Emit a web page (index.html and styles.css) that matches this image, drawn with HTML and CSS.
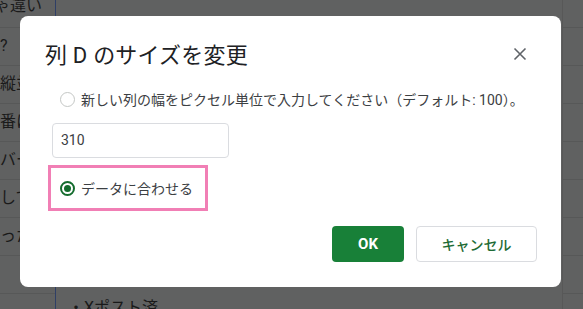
FILE: index.html
```html
<!DOCTYPE html>
<html lang="ja">
<head>
<meta charset="utf-8">
<link rel="stylesheet" href="styles.css">
</head>
<body>
<div class="sheet">
  <div class="col-left">
    <div class="cell c0">ゃ違い</div>
    <div class="cell">?</div>
    <div class="cell">縦並</div>
    <div class="cell">番に</div>
    <div class="cell">バー</div>
    <div class="cell">して</div>
    <div class="cell">った</div>
    <div class="cell"></div>
  </div>
  <div class="col-mid">
    <div class="mid-bottom">・Xポスト済</div>
  </div>
  <div class="col-right">
    <div class="rcell r0"></div>
    <div class="rcell"></div>
    <div class="rcell"></div>
    <div class="rcell"></div>
    <div class="rcell"></div>
    <div class="rcell"></div>
    <div class="rcell"></div>
    <div class="rcell"></div>
  </div>
</div>

<div class="dialog">
  <div class="head">
    <h1 class="title">列 D のサイズを変更</h1>
    <span class="close">
      <svg width="14" height="14" viewBox="0 0 14 14"><path d="M1.5 1.5 L12.5 12.5 M12.5 1.5 L1.5 12.5" stroke="#5f6368" stroke-width="1.6" fill="none"/></svg>
    </span>
  </div>
  <label class="opt opt1">
    <span class="radio"></span>
    <span class="opt-text">新しい列の幅をピクセル単位で入力してください（デフォルト: 100）。</span>
  </label>
  <div class="input">310</div>
  <div class="highlight">
    <label class="opt">
      <span class="radio on"><span class="dot"></span></span>
      <span class="opt-text">データに合わせる</span>
    </label>
  </div>
  <div class="actions">
    <button class="btn ok">OK</button>
    <button class="btn cancel">キャンセル</button>
  </div>
</div>
</body>
</html>
```

FILE: styles.css
```css
html, body {
  margin: 0;
  padding: 0;
}
body {
  width: 583px;
  height: 309px;
  overflow: hidden;
  background: #606161;
  font-family: Roboto, "Noto Sans CJK JP", sans-serif;
  position: relative;
}
.sheet {
  display: flex;
  height: 309px;
}
.col-left {
  width: 55px;
  border-right: 1px solid #2f3f66;
  display: flex;
  flex-direction: column;
}
.cell {
  height: 38px;
  box-sizing: border-box;
  border-bottom: 1px solid #575858;
  font-size: 16px;
  color: #1a1a1a;
  line-height: 36px;
  white-space: nowrap;
  overflow: hidden;
  flex: none;
}
.c0 {
  height: 28px;
  line-height: 12px;
  text-indent: -6px;
}
.col-mid {
  width: 506px;
  position: relative;
  border-right: 1px solid #585858;
}
.mid-bottom {
  position: absolute;
  left: 12px;
  top: 294px;
  font-size: 16px;
  color: #1a1a1a;
}
.col-right {
  flex: 1;
  display: flex;
  flex-direction: column;
}
.rcell {
  height: 38px;
  box-sizing: border-box;
  border-bottom: 1px solid #575858;
  flex: none;
}
.r0 {
  height: 28px;
}

.dialog {
  position: absolute;
  left: 20px;
  top: 16px;
  width: 541px;
  height: 271px;
  box-sizing: border-box;
  background: #fff;
  border-radius: 8px;
  padding: 22px 24px 25px 25px;
  display: flex;
  flex-direction: column;
}
.head {
  display: flex;
  justify-content: space-between;
  align-items: center;
  height: 30px;
}
.title {
  margin: 0;
  font-size: 22px;
  font-weight: 400;
  color: #202124;
  letter-spacing: 0.2px;
}
.close {
  display: flex;
  margin-right: 10px;
  margin-top: 2px;
}
.opt {
  display: flex;
  align-items: center;
  gap: 6px;
  font-size: 14px;
  color: #3c4043;
}
.opt1 {
  margin-top: 21px;
  margin-left: 15px;
  height: 20px;
}
.radio {
  width: 15px;
  height: 15px;
  border: 1.5px solid #c4c7c5;
  border-radius: 50%;
  box-sizing: border-box;
  display: flex;
  align-items: center;
  justify-content: center;
  flex: none;
}
.radio.on {
  border: 2px solid #146c2e;
}
.dot {
  width: 7px;
  height: 7px;
  border-radius: 50%;
  background: #146c2e;
}
.input {
  margin-top: 14px;
  margin-left: 7px;
  width: 177px;
  height: 35px;
  box-sizing: border-box;
  border: 1px solid #dadce0;
  border-radius: 4px;
  padding-left: 8px;
  font-size: 14px;
  line-height: 33px;
  color: #3c4043;
}
.highlight {
  margin-top: 7px;
  margin-left: 3px;
  width: 160px;
  height: 46px;
  box-sizing: border-box;
  border: 3px solid #f17fb5;
  display: flex;
  align-items: center;
  padding-left: 9px;
}
.actions {
  margin-top: auto;
  display: flex;
  justify-content: flex-end;
  gap: 12px;
}
.btn {
  height: 36px;
  border-radius: 4px;
  font-family: Roboto, "Noto Sans CJK JP", sans-serif;
  font-size: 14px;
  font-weight: 700;
  cursor: pointer;
}
.ok {
  width: 72px;
  background: #188038;
  color: #fff;
  border: none;
  font-size: 15px;
}
.cancel {
  width: 121px;
  background: #fff;
  border: 1px solid #dadce0;
  color: #1e6b35;
  font-weight: 500;
}
```
